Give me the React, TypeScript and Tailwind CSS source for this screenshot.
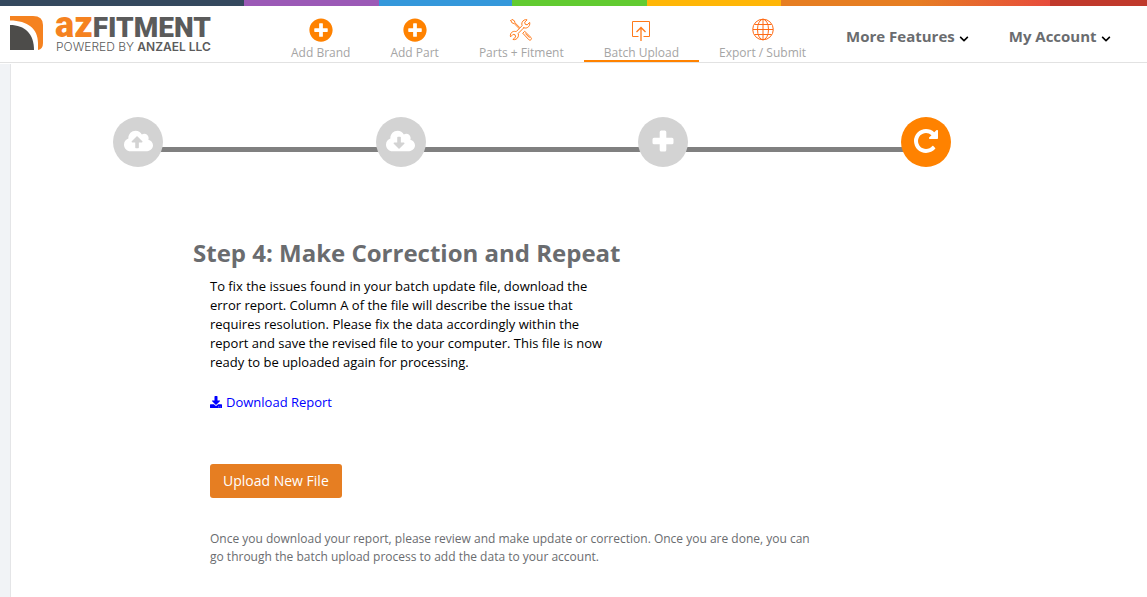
import type { ReactNode } from "react";
import {
  FaChevronDown,
  FaCloudDownloadAlt,
  FaCloudUploadAlt,
  FaDownload,
  FaPlusCircle,
} from "react-icons/fa";

function LogoMark() {
  return (
    <svg viewBox="0 0 33 34" className="h-[34px] w-[33px] shrink-0" aria-hidden="true">
      <path d="M0 0h23q10 0 10 9v18q0 6-5 7V27C28 13 18 4.500 0 4.500z" fill="#f58220" />
      <path d="M0 9c15 0 24 9 24 25H0z" fill="#4d4c4a" />
    </svg>
  );
}

function ToolsIcon() {
  return (
    <svg
      viewBox="0 0 24 24"
      className="size-6 shrink-0"
      fill="none"
      stroke="#ff7a1a"
      strokeLinejoin="round"
      strokeLinecap="round"
      aria-hidden="true"
    >
      <path d="M14.800 9.800l-5.600 5.600c.8 2.400-.2 4.800-2.200 5.800-1 .5-2.200.6-3 .3l2.600-2.600-.5-2.100-2-.5-2.600 2.600c-.5-2.200.3-4.400 2.300-5.200 1.100-.5 2.300-.4 3.300 0l6-6c-.8-2.200 0-4.500 2-5.600 1-.5 2-.6 3-.3l-2.400 2.400.5 2.100 2 .5 2.500-2.400c.4 2-.3 4-2 5-1.200.8-2.600.8-3.900.4z" />
      <path d="M1.800 2.600l1.200-1.200 2.400 1.400.6 2 4.700 4.700M1.800 2.600l1.400 2.400 2 .6 4.700 4.700" />
      <path d="M14 15l1.700-1.700 6.300 6.200c.7.800.5 1.700 0 2.200s-1.500.6-2.200 0L14 15.500zM16.500 15.700l3.800 3.800" />
    </svg>
  );
}

function UploadIcon() {
  return (
    <svg viewBox="0 0 24 24" className="size-6 shrink-0" fill="none" stroke="#ff7a1a" aria-hidden="true">
      <path d="M9.500 18.500h-6v-15h17v15h-6" />
      <path d="M12 23V9.500M7.500 14L12 9.500l4.500 4.500" strokeWidth="1.300" />
    </svg>
  );
}

function GlobeIcon() {
  return (
    <svg viewBox="0 0 24 24" className="size-6 shrink-0" fill="none" stroke="#ff6a13" aria-hidden="true">
      <circle cx="12" cy="11.500" r="10.300" />
      <ellipse cx="12" cy="11.500" rx="5.500" ry="10.300" />
      <path d="M12 1.500v20M2 11.500h20M3.500 6.500h17M3.500 16.500h17" />
    </svg>
  );
}

function PlusIcon() {
  return (
    <svg viewBox="0 0 22 22" className="size-[22px]" fill="currentColor" aria-hidden="true">
      <path d="M9.200 0.500h3.600q1.500 0 1.500 1.500v5.700H20q1.500 0 1.500 1.500v3.600q0 1.500-1.500 1.500h-5.700V20q0 1.500-1.500 1.500H9.200q-1.500 0-1.500-1.500v-5.700H2q-1.500 0-1.500-1.500V9.200q0-1.500 1.500-1.500h5.700V2q0-1.500 1.500-1.500z" />
    </svg>
  );
}

function RepeatIcon() {
  return (
    <svg viewBox="0 128 1536 1536" className="size-6" fill="currentColor" aria-hidden="true">
      <path d="M1536 256v448q0 26-19 45t-45 19h-448q-42 0-59-40-17-39 14-69l138-138q-148-137-349-137-104 0-198.500 40.500t-163.500 109.500-109.500 163.500-40.500 198.500 40.500 198.500 109.500 163.500 163.500 109.500 198.500 40.500q119 0 225-52t179-147q7-10 23-12 15 0 25 9l137 138q9 8 9.500 20.500t-7.500 22.500q-109 132-264 204.500t-327 72.500q-156 0-298-61t-245-164-164-245-61-298 61-298 164-245 245-164 298-61q147 0 284.500 55.500t244.500 156.500l130-129q29-31 70-14 39 17 39 59z" />
    </svg>
  );
}

const plus = <FaPlusCircle className="size-6 shrink-0 text-[#ff8200]" aria-hidden="true" />;

const navItems: { label: string; icon: ReactNode; active?: boolean }[] = [
  { label: "Add Brand", icon: plus },
  { label: "Add Part", icon: plus },
  { label: "Parts + Fitment", icon: <ToolsIcon /> },
  { label: "Batch Upload", icon: <UploadIcon />, active: true },
  { label: "Export / Submit", icon: <GlobeIcon /> },
];

const steps: { label: string; icon: ReactNode; current?: boolean }[] = [
  { label: "Upload file", icon: <FaCloudUploadAlt className="h-6 w-[29px]" /> },
  { label: "Download report", icon: <FaCloudDownloadAlt className="h-6 w-[29px]" /> },
  { label: "Add data", icon: <PlusIcon /> },
  { label: "Correct and repeat", icon: <RepeatIcon />, current: true },
];

function Header() {
  return (
    <header className="border-b border-[#e2e2e2] bg-white">
      <div className="h-1.5 bg-[linear-gradient(to_right,#34495e_21.3%,#9b59b6_21.3%_33%,#3498db_33%_44.6%,#62cb31_44.6%_56.4%,#ffb606_56.4%_68.1%,#e67e22_68.1%_79.8%,#e74c3c_91.5%,#c0392b_91.5%)]" />
      <div className="flex h-14">
        <a href="#home" className="flex w-[271px] shrink-0 gap-3 pt-2.5 pl-2.5">
          <LogoMark />
          <span className="flex flex-col whitespace-nowrap text-[#5b5b5b]">
            <span className="-mt-1 flex h-[26px] items-baseline font-[Roboto,sans-serif] text-[28px] leading-[26px] font-black">
              <span className="text-[36px] leading-[26px] text-[#f58220]">az</span>FITMENT
            </span>
            <span className="mt-[3px] pl-px font-[Inter,sans-serif] text-[12px] leading-3 font-light">
              POWERED BY <b className="font-semibold">ANZAEL LLC</b>
            </span>
          </span>
        </a>
        <nav className="flex whitespace-nowrap">
          {navItems.map((item) => (
            <a
              key={item.label}
              href="#nav"
              className={
                item.active
                  ? "flex flex-col items-center border-b-2 border-[#ff8200] px-5 pt-3 text-xs text-[#a5a5a5]"
                  : "flex flex-col items-center border-b-2 border-transparent px-5 pt-3 text-xs text-[#a5a5a5]"
              }
            >
              {item.icon}
              <span className="pt-1 leading-[14px]">{item.label}</span>
            </a>
          ))}
          {["More Features", "My Account"].map((label) => (
            <button
              key={label}
              type="button"
              className="flex items-center gap-1 px-5 pb-0.5 pt-1.5 text-[15px] font-bold text-[#6a6c6f]"
            >
              {label}
              <FaChevronDown className="mt-1.5 size-[10px] text-black" aria-hidden="true" />
            </button>
          ))}
        </nav>
      </div>
    </header>
  );
}

function Steps() {
  return (
    <ol className="mr-[196px] ml-[102px] flex">
      {steps.map((step, index) => (
        <li key={step.label} className={index > 0 ? "flex flex-1" : "flex"}>
          {index > 0 && <span className="mt-[30px] -mr-1 -ml-1 h-[5px] flex-1 bg-[#808080]" />}
          <span
            aria-label={step.label}
            className={
              step.current
                ? "z-10 flex size-[50px] items-center justify-center rounded-full bg-[#ff8200] pb-0.5 text-white"
                : "z-10 flex size-[50px] items-center justify-center rounded-full bg-[#d3d3d3] pb-0.5 text-white"
            }
          >
            {step.icon}
          </span>
        </li>
      ))}
    </ol>
  );
}

export default function App() {
  return (
    <div className="flex min-h-screen flex-col bg-white font-['Open_Sans',sans-serif]">
      <Header />
      <div className="mt-px flex flex-1">
        <aside className="w-[11px] shrink-0 border-r border-[#e4e5e7] bg-[#f1f3f6]" />
        <main className="flex-1 pt-[53px]">
          <Steps />
          <section className="pt-[70px] pl-[182px]">
            <h1 className="text-2xl font-bold text-[#6a6c6f]">Step 4: Make Correction and Repeat</h1>
            <div className="pt-2 pl-[17px]">
              <p className="max-w-[400px] text-[13px] leading-[19px] text-black">
                To fix the issues found in your batch update file, download the error report. Column
                A of the file will describe the issue that requires resolution. Please fix the data
                accordingly within the report and save the revised file to your computer. This file
                is now ready to be uploaded again for processing.
              </p>
              <a
                href="#report"
                className="mt-[21px] flex w-fit items-center gap-1 text-[13px] leading-[19px] text-[#0000ff]"
              >
                <FaDownload className="mb-0.5 size-3" aria-hidden="true" />
                Download Report
              </a>
              <div className="pt-[52px]">
                <button
                  type="button"
                  className="block h-[34px] rounded-[3px] bg-[#e67e22] px-[13px] text-sm text-white"
                >
                  Upload New File
                </button>
              </div>
              <p className="max-w-[610px] pt-8 text-xs leading-[18px] text-[#6a6c6f]">
                Once you download your report, please review and make update or correction. Once you
                are done, you can go through the batch upload process to add the data to your
                account.
              </p>
            </div>
          </section>
        </main>
      </div>
    </div>
  );
}
